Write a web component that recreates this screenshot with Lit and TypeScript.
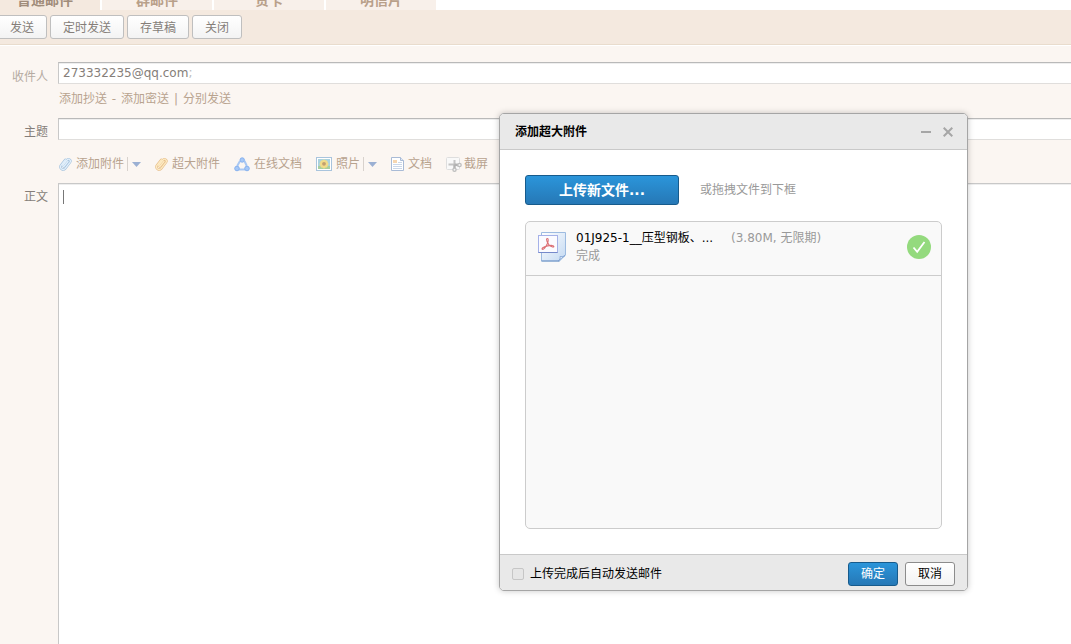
import { LitElement, html, css, svg } from "lit";
import { customElement, state } from "lit/decorators.js";

const clip = (light: string, dark: string) => svg`
  <svg class="icon" width="13" height="14" viewBox="0 0 13 14" fill="none" stroke-linecap="round" stroke-linejoin="round">
    <path d="M9 4.500 5.300 9c-.8.900-2 0-1.200-1.100L8 3c1.600-1.900 4.500.2 3 2.300L6.300 11.400c-2.200 2.700-6.300-.2-4.300-3.100L6.300 2.800" stroke=${dark} stroke-width="2.400"/>
    <path d="M9 4.500 5.300 9c-.8.900-2 0-1.200-1.100L8 3c1.600-1.900 4.500.2 3 2.300L6.300 11.400c-2.200 2.700-6.300-.2-4.300-3.100L6.300 2.800" stroke=${light} stroke-width="1.300"/>
  </svg>`;

const onlineDoc = svg`
  <svg class="icon" width="16" height="15" viewBox="0 0 16 15">
    <path d="M6 4 3.200 9M10.500 4l2.300 5M5 12.500h6" stroke="#a9c8f3" stroke-width="2" fill="none"/>
    <g fill="#a6c8f7" stroke="#86b1ef" stroke-width="1">
      <circle cx="8.200" cy="3" r="2.200"/><circle cx="3" cy="11.500" r="2.300"/><circle cx="13" cy="11.500" r="2.300"/>
    </g>
  </svg>`;

const photo = svg`
  <svg class="icon" width="16" height="14" viewBox="0 0 16 14">
    <rect x=".5" y=".5" width="15" height="13" fill="#fff" stroke="#a9c4dd"/>
    <rect x="2" y="2" width="12" height="10" fill="#a9d2df"/>
    <path d="M2 9h12v3H2z" fill="#a8cf9f"/>
    <circle cx="8" cy="7" r="4" fill="#f3dc83"/>
    <path d="M8 2.500v9M3.500 7h9M5 4l6 6M11 4l-6 6" stroke="#f2dc8c" stroke-width="1.500"/>
    <circle cx="8" cy="6.800" r="1.900" fill="#c2a070"/>
  </svg>`;

const doc = svg`
  <svg class="icon" width="13" height="14" viewBox="0 0 13 14">
    <path d="M.5.5h9l3 3v10H.5z" fill="#fff" stroke="#a9bbd6"/>
    <path d="M9.500.5v3h3" fill="#dfe8f5" stroke="#a9bbd6"/>
    <rect x="2" y="3" width="4" height="3" fill="#f6d6b0"/>
    <path d="M7 5.500h4M2 7.500h9M2 9.500h9M2 11.500h9" stroke="#cbd7e8"/>
  </svg>`;

const shot = svg`
  <svg class="icon" width="16" height="15" viewBox="0 0 16 15">
    <rect x=".5" y=".5" width="13" height="12" rx="1" fill="#f9f9f9" stroke="#dedede"/>
    <path d="M8.500 3v8M2.500 7.500h10" stroke="#c4c4c4" stroke-width="2" fill="none"/>
    <path d="M8.500 7.500 12.500 8.500M8.500 7.500v4" stroke="#b2b2b2" stroke-width="2"/>
    <g fill="#f4f4f4" stroke="#bdbdbd" stroke-width="1.300"><circle cx="13.500" cy="8" r="1.700"/><circle cx="8.500" cy="12.700" r="1.600"/></g>
  </svg>`;

const pdf = svg`
  <svg class="pdf" width="28" height="30" viewBox="0 0 28 30">
    <defs><linearGradient id="sheet" x1="0" y1="0" x2="1" y2="1"><stop offset="0" stop-color="#fff"/><stop offset="1" stop-color="#c3d9f2"/></linearGradient></defs>
    <path d="M3.500.5h24V23l-6 6h-18z" fill="url(#sheet)" stroke="#9dbbe0"/>
    <path d="M3.500 29h18" stroke="#6f93c4"/>
    <path d="M27 23.500c-2 1.500-4 1-5 1 .5 2 0 3.500-2 4.500z" fill="#f4f9ff" stroke="#7c9fd0" stroke-width=".8"/>
    <rect x=".5" y="3.500" width="19" height="17" fill="#fbfbff" stroke="#a5b1e8"/>
    <path d="M.5 20.500h19" stroke="#7589ca"/>
    <path d="M9 6.500c1.800-.6 1.300 3.300.3 5.300-1.400 2.800-3.500 6.200-5 5.500-1.300-1 2-2.700 5.200-3.400 3.500-.8 6.400-.6 6.400.6 0 1.400-3.400.1-4.900-1.700C9.500 10.900 7.700 7.200 9 6.500z" fill="none" stroke="#dc7076" stroke-width="1.100"/>
  </svg>`;

@customElement("app-root")
export class AppRoot extends LitElement {
  @state() private tabs = ["普通邮件", "群邮件", "贺卡", "明信片"];
  @state() private actions = ["发送", "定时发送", "存草稿", "关闭"];

  static styles = css`
    :host {
      display: flex;
      flex-direction: column;
      position: relative;
      min-height: 100vh;
      overflow: hidden;
      background: #fbf6f2;
      color: #857e79;
      font: 12px/18px "DejaVu Sans", "Noto Sans CJK SC", sans-serif;
    }
    * { box-sizing: border-box; }
    button, input, textarea { font: inherit; color: inherit; margin: 0; }
    button { cursor: pointer; }
    a { color: #b8a38f; text-decoration: none; }
    svg { display: block; flex: none; }

    .tabs {
      display: flex;
      align-items: flex-end;
      gap: 2px;
      height: 10px;
      overflow: hidden;
      background: #fff;
      margin-left: -10px;
    }
    .tab {
      width: 110px;
      padding: 0 0 1px;
      border: 0;
      background: #f8f0ea;
      color: #b8a08a;
      font-size: 14px;
      line-height: 18px;
      font-weight: bold;
      text-align: center;
    }
    .tab.on { background: #f4e9df; color: #a08c7a; }

    .actions {
      display: flex;
      gap: 3px;
      padding: 5px 0;
      margin-left: -3px;
      background: #f4e9df;
      border-bottom: 1px solid #e9dccd;
      box-shadow: 0 1px #fff;
    }
    .btn {
      height: 24px;
      padding: 1px 12px 0;
      border: 1px solid #bfbfbf;
      border-radius: 3px;
      background: linear-gradient(#fff, #f3f3f3);
      line-height: 20px;
    }

    .form {
      flex: 1;
      display: grid;
      grid-template-columns: 48px minmax(0, 1fr);
      grid-template-rows: auto auto auto auto 1fr;
      column-gap: 10px;
      padding-top: 17px;
    }
    .label { text-align: right; padding-top: 5px; }
    .label.soft { color: #b5aba2; padding-top: 6px; }
    .field {
      display: flex;
      align-items: center;
      width: 100%;
      height: 22px;
      padding: 0 4px;
      background: #fff;
      border: 1px solid #c8c8c8;
      border-color: #b9b9b9 transparent #e0dedc #c8c8c8;
      border-right: 0;
      border-radius: 0;
      outline: 0;
      box-shadow: inset 0 1px #eeeeee;
    }
    .field input { flex: 1; min-width: 0; border: 0; outline: 0; padding: 0; background: none; }
    .semi { color: #bdbdbd; }
    .links { grid-column: 2; display: flex; padding: 4px 0 0 1px; color: #b8a38f; }
    .links span { width: 14px; text-align: center; }
    .subject { margin-top: 10px; }
    .tools { grid-column: 2; display: flex; align-items: center; gap: 14px; padding: 14px 0 10px 1px; }
    .tool { display: flex; align-items: center; }
    .tool a { display: flex; align-items: center; gap: 4px; white-space: nowrap; }
    .tool a.tight { gap: 2px; }
    .more {
      display: flex;
      align-items: center;
      height: 14px;
      margin-left: 3px;
      padding: 0 0 0 4px;
      border: 0;
      border-left: 1px solid #d8d2cd;
      background: none;
    }
    .editor { position: relative; display: flex; }
    .editor textarea {
      flex: 1;
      resize: none;
      border: 1px solid #c8c8c8;
      border-width: 1px 0 0 1px;
      border-radius: 0;
      outline: 0;
      padding: 5px 4px;
      background: #fff;
      box-shadow: inset 0 1px #eeeeee;
    }
    .caret { position: absolute; left: 5px; top: 7px; width: 1px; height: 14px; background: #777; }

    .dialog {
      position: absolute;
      top: 113px;
      right: 103px;
      width: 469px;
      border: 1px solid #a5a5a5;
      border-radius: 5px;
      overflow: hidden;
      background: #fff;
      color: #000;
      box-shadow: 0 0 6px rgba(0, 0, 0, 0.22);
    }
    .head {
      display: flex;
      align-items: center;
      gap: 12px;
      height: 36px;
      padding: 0 14px 0 15px;
      background: #e9e9e9;
      border-bottom: 1px solid #c9c9c9;
    }
    h2 { flex: 1; margin: 0; font-size: 12px; line-height: 18px; }
    .ctl { padding: 0; border: 0; background: none; }
    .body { padding: 25px; }
    .pick { display: flex; align-items: center; gap: 21px; color: #999; }
    .primary {
      border: 1px solid #175b8c;
      border-radius: 3px;
      background: linear-gradient(#2b95da, #2678b6);
      color: #fff;
    }
    .upload { width: 154px; height: 30px; padding: 0; font-size: 14px; line-height: 20px; font-weight: bold; }
    .list {
      min-height: 308px;
      margin: 16px 0 0;
      padding: 0;
      list-style: none;
      border: 1px solid #ccc;
      border-radius: 5px;
      background: #f9f9f9;
    }
    .file {
      display: flex;
      align-items: center;
      height: 54px;
      padding: 0 10px 4px 12px;
      border-bottom: 1px solid #ccc;
    }
    .info { flex: 1; margin: 0 10px; color: #999; }
    .line { display: flex; gap: 6px; }
    .name { width: 149px; white-space: nowrap; color: #000; }
    .foot {
      display: flex;
      align-items: center;
      gap: 7px;
      height: 36px;
      padding: 2px 12px 0;
      background: #e9e9e9;
      border-top: 1px solid #c9c9c9;
    }
    .auto { flex: 1; display: flex; align-items: center; gap: 6px; }
    .auto input {
      appearance: none;
      width: 12px;
      height: 12px;
      border: 1px solid #c6c6c6;
      border-radius: 2px;
      background: #e6e6e6;
    }
    .foot .btn { width: 50px; padding: 1px 0 0; border-color: #8c8c8c; }
    .foot .primary { background: linear-gradient(#2b95da, #2678b6); border-color: #175b8c; }
  `;

  private more(label: string) {
    return html`<button class="more" aria-label=${label}>
      <svg width="9" height="5" viewBox="0 0 9 5"><path d="M0 0h9L4.500 5z" fill="#9bb0d3"/></svg>
    </button>`;
  }

  render() {
    return html`
      <nav class="tabs">
        ${this.tabs.map((t, i) => html`<button class="tab ${i === 0 ? "on" : ""}">${t}</button>`)}
      </nav>
      <div class="actions">${this.actions.map((a) => html`<button class="btn">${a}</button>`)}</div>

      <div class="form">
        <label class="label soft" for="to">收件人</label>
        <div class="field"><span>273332235@qq.com</span><span class="semi">;</span><input id="to" type="text" /></div>
        <div class="links">
          <a href="#">添加抄送</a><span>-</span><a href="#">添加密送</a><span>|</span><a href="#">分别发送</a>
        </div>
        <label class="label subject" for="subject">主题</label>
        <input class="field subject" id="subject" type="text" />
        <div class="tools">
          <div class="tool"><a href="#">${clip("#e3f0fb", "#a3c1dd")}添加附件</a>${this.more("更多附件")}</div>
          <div class="tool"><a href="#">${clip("#fdebc4", "#e6bd88")}超大附件</a></div>
          <div class="tool"><a href="#">${onlineDoc}在线文档</a></div>
          <div class="tool"><a href="#">${photo}照片</a>${this.more("更多照片")}</div>
          <div class="tool"><a href="#">${doc}文档</a></div>
          <div class="tool"><a class="tight" href="#">${shot}截屏</a></div>
        </div>
        <label class="label" for="content">正文</label>
        <div class="editor"><textarea id="content"></textarea><span class="caret"></span></div>
      </div>

      <section class="dialog" role="dialog" aria-labelledby="title">
        <header class="head">
          <h2 id="title">添加超大附件</h2>
          <button class="ctl" aria-label="最小化"><svg width="10" height="10"><path d="M0 5h10" stroke="#a6a6a6" stroke-width="2"/></svg></button>
          <button class="ctl" aria-label="关闭"><svg width="10" height="10"><path d="M.7.7l8.600 8.600M9.300.7L.7 9.300" stroke="#a6a6a6" stroke-width="2"/></svg></button>
        </header>
        <div class="body">
          <div class="pick"><button class="primary upload">上传新文件...</button><span>或拖拽文件到下框</span></div>
          <ul class="list">
            <li class="file">
              ${pdf}
              <div class="info">
                <div class="line"><span class="name">01J925-1__压型钢板、...</span><span>(3.80M, 无限期)</span></div>
                <div>完成</div>
              </div>
              <svg width="24" height="24"><circle cx="12" cy="12" r="12" fill="#94da7e"/><path d="M6.500 12.500l3.700 4.300L17.500 7" fill="none" stroke="#fff" stroke-width="1.800"/></svg>
            </li>
          </ul>
        </div>
        <footer class="foot">
          <label class="auto"><input type="checkbox" />上传完成后自动发送邮件</label>
          <button class="btn primary">确定</button>
          <button class="btn">取消</button>
        </footer>
      </section>
    `;
  }
}
